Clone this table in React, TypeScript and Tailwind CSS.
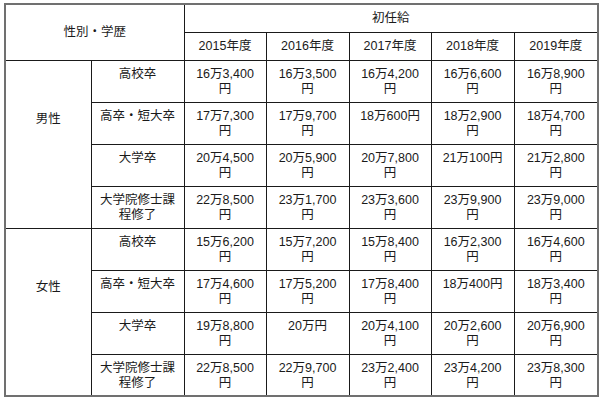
const years = ["2015年度", "2016年度", "2017年度", "2018年度", "2019年度"];

const groups = [
  {
    label: "男性",
    rows: [
      { edu: "高校卒", pay: ["16万3,400円", "16万3,500円", "16万4,200円", "16万6,600円", "16万8,900円"] },
      { edu: "高卒・短大卒", pay: ["17万7,300円", "17万9,700円", "18万600円", "18万2,900円", "18万4,700円"] },
      { edu: "大学卒", pay: ["20万4,500円", "20万5,900円", "20万7,800円", "21万100円", "21万2,800円"] },
      { edu: "大学院修士課程修了", pay: ["22万8,500円", "23万1,700円", "23万3,600円", "23万9,900円", "23万9,000円"] },
    ],
  },
  {
    label: "女性",
    rows: [
      { edu: "高校卒", pay: ["15万6,200円", "15万7,200円", "15万8,400円", "16万2,300円", "16万4,600円"] },
      { edu: "高卒・短大卒", pay: ["17万4,600円", "17万5,200円", "17万8,400円", "18万400円", "18万3,400円"] },
      { edu: "大学卒", pay: ["19万8,800円", "20万円", "20万4,100円", "20万2,600円", "20万6,900円"] },
      { edu: "大学院修士課程修了", pay: ["22万8,500円", "22万9,700円", "23万2,400円", "23万4,200円", "23万8,300円"] },
    ],
  },
];

const cell = "border border-[#1a1a1a] px-[8px] text-center";

export default function App() {
  return (
    <div
      className="w-[600px] h-[400px] bg-white pl-[4px] pt-[3px] text-[#1a1a1a] text-[12.5px] leading-[15px]"
      style={{ fontFamily: '"Liberation Sans", "Noto Sans CJK JP", sans-serif' }}
    >
      <table className="table-fixed border-collapse border-2 border-[#707070] w-[593px]">
        <colgroup>
          <col className="w-[86px]" />
          <col className="w-[93px]" />
          <col className="w-[82px]" />
          <col className="w-[83px]" />
          <col className="w-[82px]" />
          <col className="w-[83px]" />
          <col className="w-[84px]" />
        </colgroup>
        <thead>
          <tr className="h-[28px]">
            <th colSpan={2} rowSpan={2} className={`${cell} font-normal align-middle`}>
              性別・学歴
            </th>
            <th colSpan={5} className={`${cell} font-normal align-middle`}>
              初任給
            </th>
          </tr>
          <tr className="h-[28px]">
            {years.map((y) => (
              <th key={y} className={`${cell} font-normal align-middle`}>
                {y}
              </th>
            ))}
          </tr>
        </thead>
        <tbody>
          {groups.map((g) =>
            g.rows.map((r, i) => (
              <tr key={g.label + r.edu} className="h-[42px]">
                {i === 0 && (
                  <td rowSpan={4} className={`${cell} align-top pt-[51px]`}>
                    {g.label}
                  </td>
                )}
                <td className={`${cell} align-top pt-[6px]`}>{r.edu}</td>
                {r.pay.map((p, j) => (
                  <td key={j} className={`${cell} align-top pt-[6px]`}>
                    {p}
                  </td>
                ))}
              </tr>
            ))
          )}
        </tbody>
      </table>
    </div>
  );
}
